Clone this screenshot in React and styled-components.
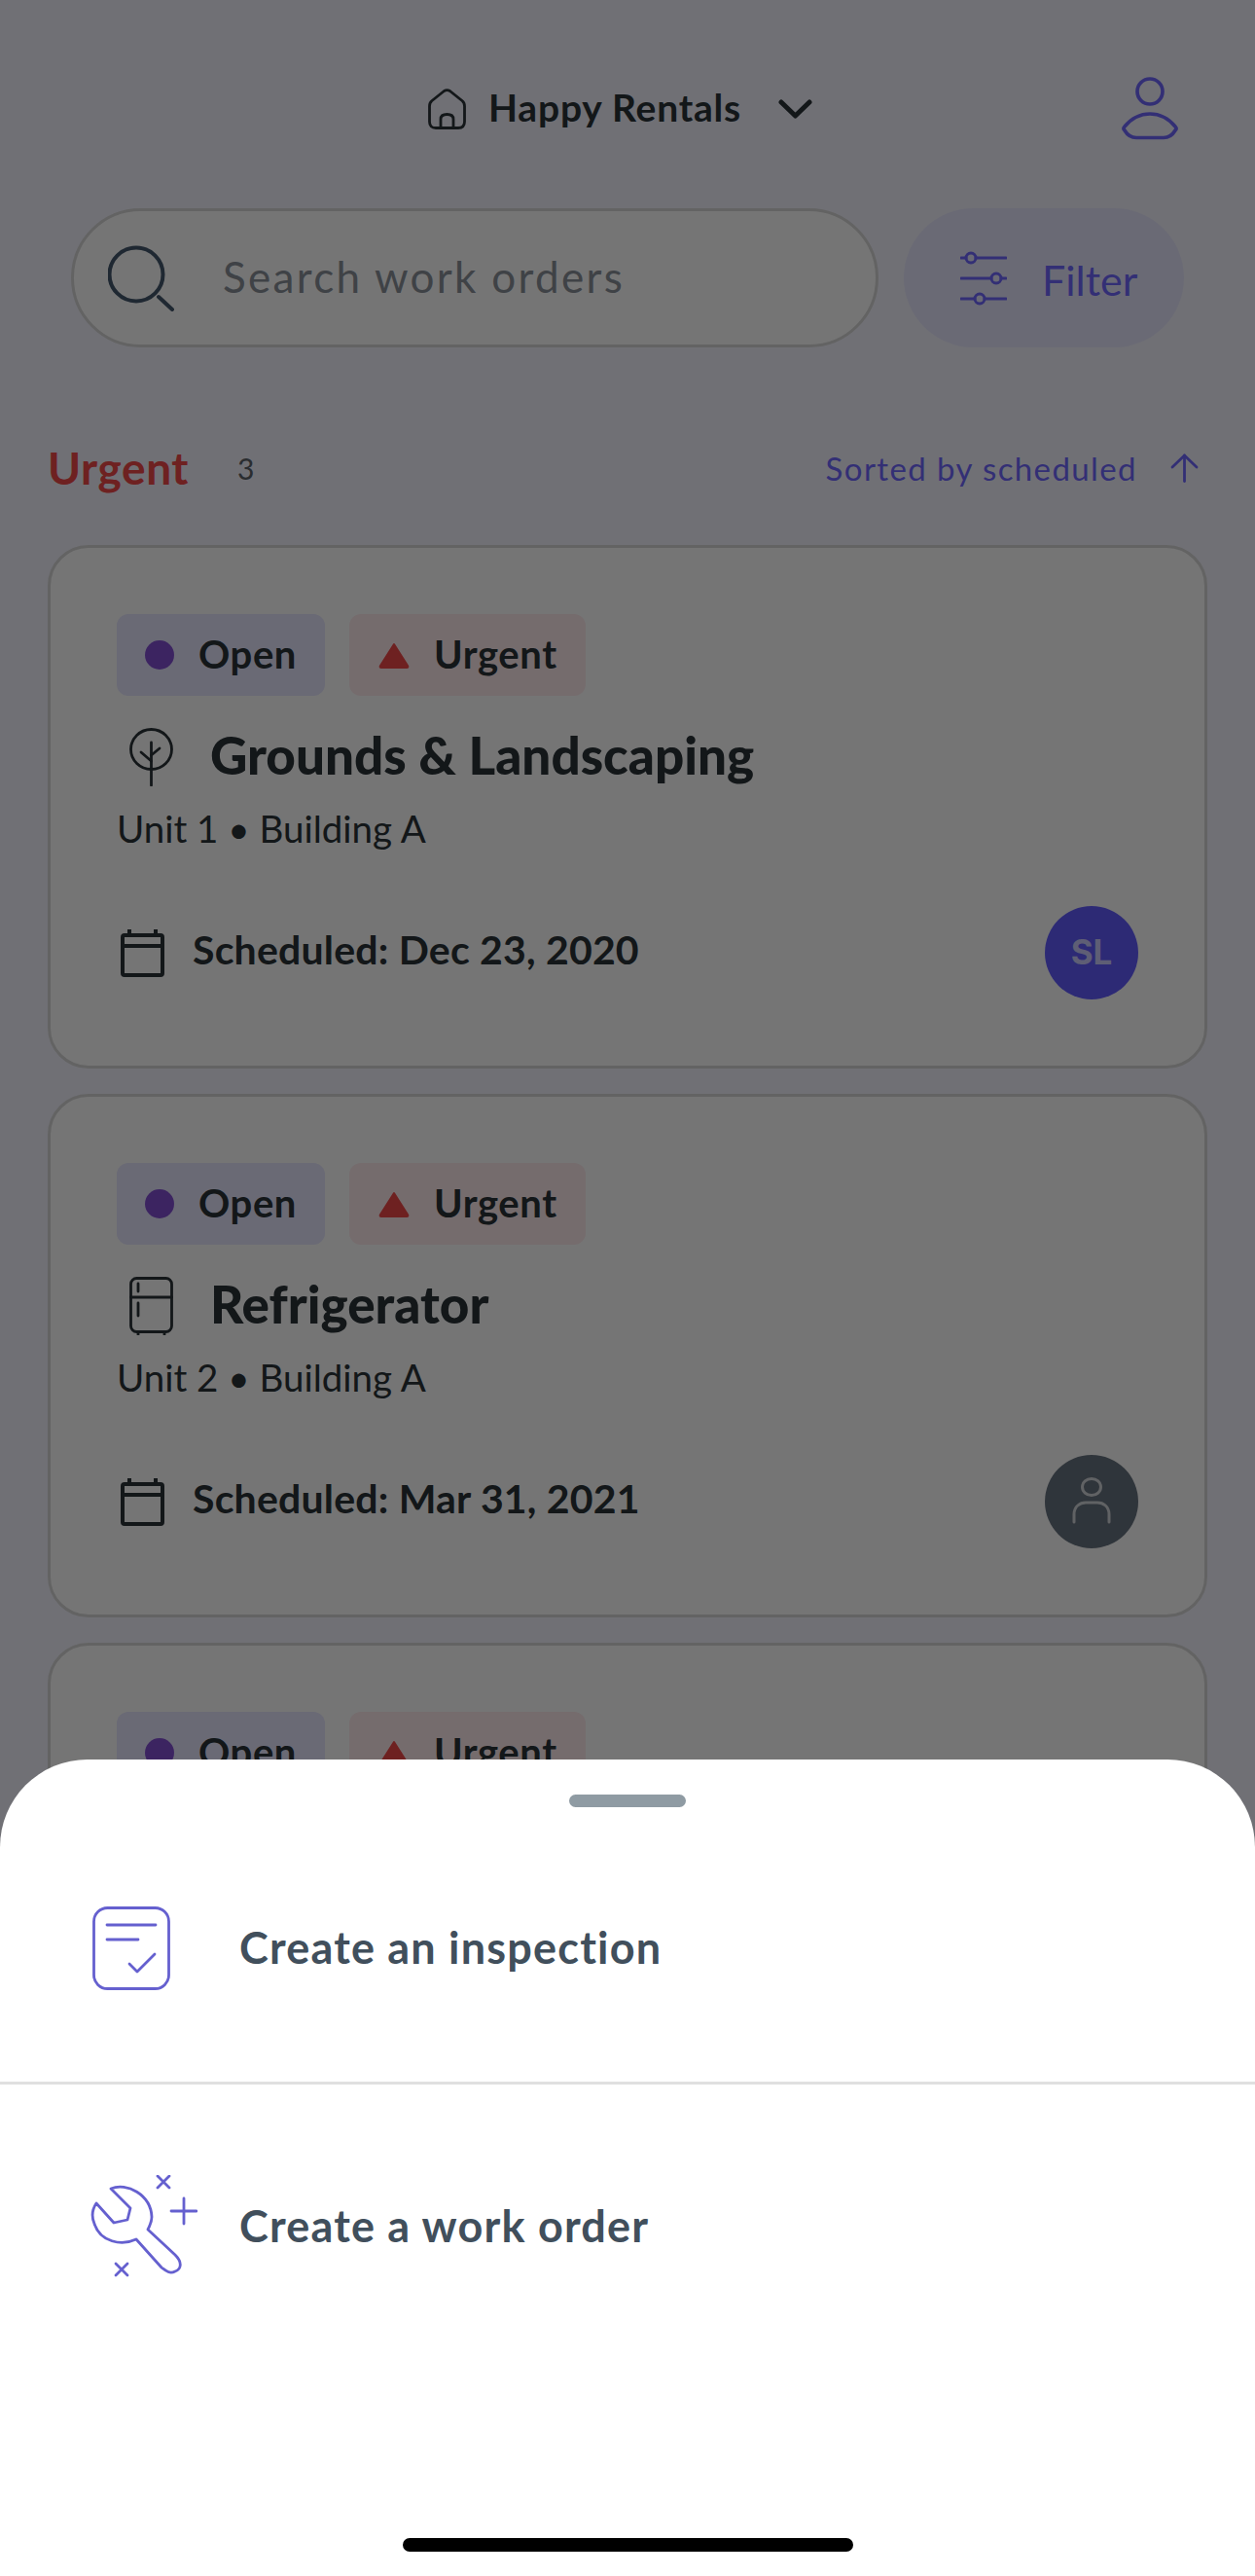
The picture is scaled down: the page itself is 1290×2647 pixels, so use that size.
import React from 'react'
import styled, { createGlobalStyle } from 'styled-components'

const FONT = `Lato, "Open Sans", "Liberation Sans", sans-serif`
const INK = '#2a3238'
const INDIGO = '#6f68ff'
const RED = '#f04848'

const GlobalStyle = createGlobalStyle`
  html, body {
    margin: 0;
    padding: 0;
    background: #f4f4ff;
  }
  * {
    box-sizing: border-box;
  }
  body {
    font-family: ${FONT};
    color: ${INK};
  }
`

// icons
const HouseIcon = () => (
  <svg width="39" height="42" viewBox="0 0 39 42" fill="none" stroke={INK} strokeWidth="2.8" strokeLinejoin="round">
    <path d="M16.5 2.5 Q19.5 0.8 22.5 2.5 L35 12.5 Q37.5 14.5 37.5 18 V34 Q37.5 40.5 31 40.5 H8 Q1.5 40.5 1.5 34 V18 Q1.5 14.5 4 12.5 Z" />
    <path d="M13 40.5 V31.5 Q13 26.5 19.5 26.5 Q26 26.5 26 31.5 V40.5" />
  </svg>
)

const ChevronIcon = () => (
  <svg width="35" height="20" viewBox="0 0 35 20" fill="none" stroke={INK} strokeWidth="5" strokeLinecap="round" strokeLinejoin="round">
    <path d="M3 3 L17.5 17 L32 3" />
  </svg>
)

const UserIcon = () => (
  <svg width="58" height="66" viewBox="0 0 58 66" fill="none" stroke={INDIGO} strokeWidth="3.7">
    <circle cx="29" cy="15" r="13" />
    <path d="M29 38 C42 38 50 45 55 51 Q57 53 55 55 C52 60 48 62.5 43 62.5 H15 C10 62.5 6 60 3 55 Q1 53 3 51 C8 45 16 38 29 38 Z" />
  </svg>
)

const SearchIcon = () => (
  <svg width="68" height="68" viewBox="0 0 68 68" fill="none" stroke="#44586e" strokeWidth="4" strokeLinecap="round">
    <circle cx="29" cy="30" r="27.5" />
    <path d="M52 53 L66 66" />
  </svg>
)

const SlidersIcon = () => (
  <svg width="48" height="56" viewBox="0 0 48 56" fill="none" stroke={INDIGO} strokeWidth="3" strokeLinecap="round">
    <circle cx="11" cy="7" r="5" />
    <path d="M1 7 H6 M16 7 H47" />
    <circle cx="37" cy="28" r="5" />
    <path d="M1 28 H32 M42 28 H47" />
    <circle cx="20" cy="49" r="5" />
    <path d="M1 49 H15 M25 49 H47" />
  </svg>
)

const ArrowUpIcon = () => (
  <svg width="29" height="30" viewBox="0 0 29 30" fill="none" stroke={INDIGO} strokeWidth="2.8" strokeLinecap="round" strokeLinejoin="round">
    <path d="M14.5 2 V28.5" />
    <path d="M2 14 L14.5 2 L27 14" />
  </svg>
)

const TriangleIcon = () => (
  <svg width="32" height="27" viewBox="0 0 32 27">
    <path d="M16 2 L30 24 Q31 26 29 26 H3 Q1 26 2 24 Z" fill={RED} stroke={RED} strokeWidth="2" strokeLinejoin="round" />
  </svg>
)

const TreeIcon = () => (
  <svg width="45" height="60" viewBox="0 0 45 60" fill="none" stroke={INK} strokeWidth="2.8" strokeLinecap="round">
    <ellipse cx="22.5" cy="22" rx="21" ry="20.5" />
    <path d="M22.5 15 V59" />
    <path d="M22.5 34 L12 25" />
    <path d="M22.5 28 L31 21" />
  </svg>
)

const FridgeIcon = () => (
  <svg width="45" height="60" viewBox="0 0 45 60" fill="none" stroke={INK} strokeWidth="2.8" strokeLinecap="round">
    <rect x="1.5" y="1.5" width="42" height="55" rx="6" />
    <path d="M1.5 21 H43.5" />
    <path d="M9 7 V15" />
    <path d="M9 27 V40" />
    <path d="M9 57 V59.5" />
    <path d="M36 57 V59.5" />
  </svg>
)

const CalendarIcon = () => (
  <svg width="45" height="49" viewBox="0 0 45 49" fill="none" stroke={INK} strokeWidth="4" strokeLinejoin="round">
    <rect x="2" y="6" width="41" height="41" rx="2" />
    <path d="M2 17 H43" />
    <path d="M9 0 V6" />
    <path d="M36 0 V6" />
  </svg>
)

const AvatarUserIcon = () => (
  <svg width="40" height="48" viewBox="0 0 40 48" fill="none" stroke="#ffffff" strokeOpacity="0.7" strokeWidth="3" strokeLinecap="round">
    <ellipse cx="20" cy="10" rx="9.5" ry="8.5" />
    <path d="M2 46 V38 C2 30 8 26 14 26 H26 C32 26 38 30 38 38 V46" />
  </svg>
)

const InspectionIcon = () => (
  <svg width="80" height="86" viewBox="0 0 80 86" fill="none" stroke="#6560cf" strokeWidth="2.8" strokeLinecap="round" strokeLinejoin="round">
    <rect x="1.5" y="1.5" width="77" height="83" rx="14" />
    <path d="M15 19 H65" />
    <path d="M15 34 H47" />
    <path d="M38 59 L46 67 L64 49" />
  </svg>
)

const WrenchIcon = () => (
  <svg width="110" height="105" viewBox="23 15 110 105" fill="none" stroke="#6560cf" strokeWidth="2.8" strokeLinecap="round" strokeLinejoin="round">
    <path d="M44 29 C60 22 85 35 86 58 C86 63 84 67 82 71 L110 97 C118 105 116 112 110 114 C104 117 100 113 96 110 L70 81 C55 88 33 84 27 65 C24 58 25 50 29 44 L47 64 L61 61 L64 49 Z" />
    <path d="M92 16 L104 28 M104 16 L92 28" />
    <path d="M106 52 H132 M119 39 V65" />
    <path d="M49 106 L61 118 M61 106 L49 118" />
  </svg>
)

// the third card is cut off by the sheet, only its tags show
const orders = [
  { id: 1, title: 'Grounds & Landscaping', Icon: TreeIcon, place: 'Unit 1 • Building A', date: 'Scheduled: Dec 23, 2020', initials: 'SL' },
  { id: 2, title: 'Refrigerator', Icon: FridgeIcon, place: 'Unit 2 • Building A', date: 'Scheduled: Mar 31, 2021' },
  { id: 3 },
]

const App = () => {
  return (
    <Screen>
      <GlobalStyle />
      <TopBar>
        <PropertyPicker>
          <HouseIcon />
          <PropertyName>Happy Rentals</PropertyName>
          <ChevronIcon />
        </PropertyPicker>
        <UserIcon />
      </TopBar>

      <SearchRow>
        <SearchBox>
          <SearchIcon />
          <SearchText>Search work orders</SearchText>
        </SearchBox>
        <FilterButton>
          <SlidersIcon />
          <FilterText>Filter</FilterText>
        </FilterButton>
      </SearchRow>

      <SectionHead>
        <SectionTitle>Urgent</SectionTitle>
        <SectionCount>3</SectionCount>
        <SortLabel>Sorted by scheduled</SortLabel>
        <ArrowUpIcon />
      </SectionHead>

      <CardList>
        {orders.map(({ id, title, Icon, place, date, initials }) => (
          <Card key={id}>
            <Tags>
              <Tag $kind="open">
                <Dot />
                <TagText>Open</TagText>
              </Tag>
              <Tag $kind="urgent">
                <TriangleIcon />
                <TagText>Urgent</TagText>
              </Tag>
            </Tags>
            {title && (
              <>
                <TitleRow>
                  <Icon />
                  <CardTitle>{title}</CardTitle>
                </TitleRow>
                <Place>{place}</Place>
                <CardFooter>
                  <CalendarIcon />
                  <DateText>{date}</DateText>
                  <Avatar $assigned={!!initials}>{initials || <AvatarUserIcon />}</Avatar>
                </CardFooter>
              </>
            )}
          </Card>
        ))}
      </CardList>

      <Scrim />

      <Sheet>
        <Handle />
        <SheetRow $divided>
          <IconSlot $indent={2} $drop={2}>
            <InspectionIcon />
          </IconSlot>
          <SheetLabel>Create an inspection</SheetLabel>
        </SheetRow>
        <SheetRow>
          <IconSlot>
            <WrenchIcon />
          </IconSlot>
          <SheetLabel>Create a work order</SheetLabel>
        </SheetRow>
        <HomeIndicator />
      </Sheet>
    </Screen>
  )
}

const Screen = styled.div`
  position: relative;
  width: 1290px;
  height: 2647px;
  overflow: hidden;
  background: #f4f4ff;
`

const TopBar = styled.header`
  display: flex;
  align-items: center;
  justify-content: space-between;
  height: 64px;
  margin-top: 80px;
  padding: 0 79px 0 440px;
`

const PropertyPicker = styled.div`
  display: flex;
  align-items: center;
`

const PropertyName = styled.span`
  margin: 0 38px 0 23px;
  padding-bottom: 5px;
  font-size: 39px;
  font-weight: 700;
  letter-spacing: 0.8px;
`

const SearchRow = styled.div`
  display: flex;
  gap: 26px;
  margin-top: 70px;
  padding-left: 73px;
`

const SearchBox = styled.div`
  display: flex;
  align-items: center;
  width: 830px;
  height: 143px;
  padding-left: 35px;
  border: 3px solid #d8d8d8;
  border-radius: 72px;
  background: #fff;
`

const SearchText = styled.span`
  margin-left: 50px;
  padding-bottom: 3px;
  font-size: 44px;
  letter-spacing: 2.3px;
  color: #8a9099;
`

const FilterButton = styled.div`
  display: flex;
  align-items: center;
  gap: 36px;
  width: 288px;
  height: 143px;
  padding-left: 58px;
  border-radius: 72px;
  background: #e8e8ff;
`

const FilterText = styled.span`
  padding-top: 3px;
  font-size: 43px;
  color: ${INDIGO};
`

const SectionHead = styled.div`
  display: flex;
  align-items: center;
  height: 60px;
  margin-top: 94px;
  padding: 0 58px 0 49px;
`

const SectionTitle = styled.h2`
  margin: 0;
  padding-bottom: 2px;
  font-size: 46px;
  font-weight: 700;
  letter-spacing: 0.6px;
  color: ${RED};
`

const SectionCount = styled.span`
  margin-left: 50px;
  font-size: 30px;
  color: #5c6269;
`

const SortLabel = styled.span`
  margin: 0 34px 0 auto;
  font-size: 33px;
  letter-spacing: 1.4px;
  color: ${INDIGO};
`

const CardList = styled.div`
  display: flex;
  flex-direction: column;
  gap: 26px;
  margin-top: 49px;
  padding: 0 49px;
`

const Card = styled.article`
  flex: none;
  height: 538px;
  padding: 68px 68px 67px;
  border: 3px solid #d8d8d8;
  border-radius: 42px;
  background: #fff;
`

const Tags = styled.div`
  display: flex;
  gap: 25px;
`

const Tag = styled.span`
  display: flex;
  align-items: center;
  gap: 25px;
  height: 84px;
  padding: ${(p) => (p.$kind === 'urgent' ? '0 29px 0 30px' : '0 29px')};
  border-radius: 12px;
  font-size: 40px;
  font-weight: 700;
  letter-spacing: 0.6px;
  background: ${(p) => (p.$kind === 'urgent' ? '#ffebee' : '#e6e6ff')};
`

const TagText = styled.span`
  padding-bottom: 3px;
`

const Dot = styled.i`
  width: 30px;
  height: 30px;
  border-radius: 50%;
  background: #8450d4;
`

const TitleRow = styled.div`
  display: flex;
  align-items: center;
  gap: 38px;
  height: 60px;
  margin-top: 33px;
  padding-left: 13px;
`

const CardTitle = styled.h3`
  margin: 0;
  padding-bottom: 5px;
  font-size: 53px;
  font-weight: 900;
`

const Place = styled.p`
  margin: 21px 0 0;
  font-size: 38.5px;
  line-height: 44px;
  font-weight: 400;
`

const CardFooter = styled.div`
  display: flex;
  align-items: center;
  gap: 29px;
  height: 96px;
  margin-top: 58px;
  padding-left: 4px;
`

const DateText = styled.span`
  padding-bottom: 7px;
  font-size: 41px;
  font-weight: 700;
  letter-spacing: 0.2px;
`

const Avatar = styled.div`
  display: flex;
  align-items: center;
  justify-content: center;
  width: 96px;
  height: 96px;
  margin-left: auto;
  border-radius: 50%;
  padding-bottom: 2px;
  font-size: 35px;
  font-weight: 700;
  font-family: Inter, sans-serif;
  color: rgba(255, 255, 255, 0.7);
  background: ${(p) => (p.$assigned ? '#625cff' : '#687380')};
`

const Scrim = styled.div`
  position: absolute;
  inset: 0;
  background: rgba(0, 0, 0, 0.54);
`

const Sheet = styled.section`
  position: absolute;
  left: 0;
  right: 0;
  bottom: 0;
  display: flex;
  flex-direction: column;
  height: 839px;
  padding-top: 36px;
  border-radius: 90px 90px 0 0;
  background: #fff;
`

const Handle = styled.div`
  flex: none;
  align-self: center;
  width: 120px;
  height: 13px;
  margin-bottom: 8px;
  border-radius: 7px;
  background: #8f9ba3;
`

const SheetRow = styled.div`
  flex: none;
  display: flex;
  align-items: center;
  height: ${(p) => (p.$divided ? '277px' : '290px')};
  padding-bottom: ${(p) => (p.$divided ? '3px' : '0')};
  padding-left: 93px;
  border-bottom: ${(p) => (p.$divided ? '3px solid #e0e0e0' : 'none')};
`

const IconSlot = styled.div`
  display: flex;
  width: 153px;
  padding-left: ${(p) => p.$indent || 0}px;
  padding-top: ${(p) => p.$drop || 0}px;
`

const SheetLabel = styled.span`
  font-size: 45px;
  font-weight: 700;
  letter-spacing: 1.2px;
  color: #414f5c;
`

const HomeIndicator = styled.div`
  align-self: center;
  width: 463px;
  height: 14px;
  margin-top: auto;
  margin-bottom: 25px;
  border-radius: 7px;
  background: #000;
`

export default App
